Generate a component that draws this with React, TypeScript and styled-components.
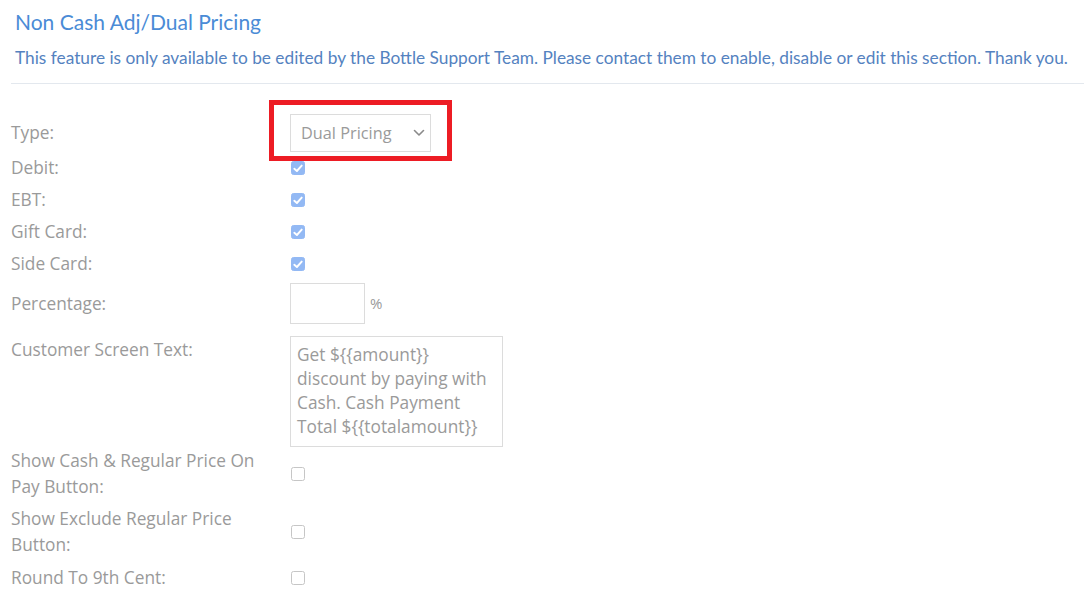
import React from "react";
import styled, { createGlobalStyle } from "styled-components";

const GlobalStyle = createGlobalStyle`
  html, body { margin: 0; padding: 0; background: #ffffff; }
  body { font-family: "Open Sans", "Liberation Sans", sans-serif; }
  * { box-sizing: border-box; }
`;

const Page = styled.div`
  width: 1084px;
  padding-left: 11px;
`;

const Header = styled.div`
  padding: 10px 0 0 4px;
`;

const Title = styled.h2`
  margin: 0;
  font-family: "Lato", "Liberation Sans", sans-serif;
  font-weight: 400;
  font-size: 21px;
  line-height: 24px;
  color: #4a8bd6;
`;

const Notice = styled.p`
  margin: 12px 0 0;
  font-family: "Lato", "Liberation Sans", sans-serif;
  font-size: 17.3px;
  line-height: 24px;
  color: #5482c0;
  white-space: nowrap;
`;

const Divider = styled.hr`
  margin: 13px 0 0;
  border: 0;
  border-top: 1px solid #e3e8ee;
`;

const Form = styled.div`
  padding-top: 30px;
  display: flex;
  flex-direction: column;
`;

const Row = styled.div<{ $h?: number; $mt?: number; $top?: boolean }>`
  display: grid;
  grid-template-columns: 279px 1fr;
  align-items: ${(p) => (p.$top ? "start" : "center")};
  min-height: ${(p) => p.$h ?? 32}px;
  margin-top: ${(p) => p.$mt ?? 0}px;
`;

const Label = styled.div<{ $pt?: number }>`
  padding-right: 15px;
  padding-top: ${(p) => p.$pt ?? 0}px;
  font-size: 17.3px;
  line-height: 25.5px;
  color: #9a9a9a;
`;

const Control = styled.div`
  display: flex;
  align-items: center;
  gap: 5px;
`;

const SelectWrap = styled.div`
  position: relative;
`;

const SelectBox = styled.div`
  width: 141px;
  height: 38px;
  border: 1px solid #dcdcdc;
  background: #fff;
  display: flex;
  align-items: center;
  justify-content: space-between;
  padding: 0 5px 0 10px;
  font-size: 16.3px;
  color: #9a9a9a;
`;

const Highlight = styled.div`
  position: absolute;
  left: -21px;
  top: -14px;
  width: 183px;
  height: 61px;
  border: 5px solid #ed1c24;
  pointer-events: none;
`;

const Check = styled.span<{ $on?: boolean }>`
  width: 14px;
  height: 14px;
  margin-left: 0.5px;
  border-radius: 2.5px;
  display: inline-flex;
  align-items: center;
  justify-content: center;
  background: ${(p) => (p.$on ? "#93b9f4" : "#ffffff")};
  border: 1px solid ${(p) => (p.$on ? "#93b9f4" : "#c6c6c6")};
`;

const TextInput = styled.div`
  width: 75px;
  height: 41px;
  border: 1px solid #dcdcdc;
  background: #fff;
`;

const Unit = styled.span`
  font-size: 15px;
  line-height: 20px;
  color: #9a9a9a;
  margin-top: -2px;
`;

const TextArea = styled.textarea`
  width: 213px;
  height: 111px;
  border: 1px solid #dcdcdc;
  padding: 6px 6px;
  margin: 0;
  font-family: "Open Sans", "Liberation Sans", sans-serif;
  font-size: 17.3px;
  line-height: 24px;
  color: #9a9a9a;
  resize: none;
  overflow: hidden;
  outline: none;
  display: block;
`;

const Chevron = () => (
  <svg width="12" height="8" viewBox="0 0 12 8" fill="none">
    <path d="M1.5 1.5 L6 6 L10.5 1.5" stroke="#8a8a8a" strokeWidth="1.6" strokeLinecap="round" strokeLinejoin="round" />
  </svg>
);

const Tick = () => (
  <svg width="10" height="9" viewBox="0 0 10 9" fill="none">
    <path d="M1.3 4.8 L3.9 7 L8.7 1.6" stroke="#ffffff" strokeWidth="1.9" strokeLinecap="round" strokeLinejoin="round" />
  </svg>
);

const CheckBox = ({ on }: { on?: boolean }) => <Check $on={on}>{on && <Tick />}</Check>;

export default function App() {
  return (
    <>
      <GlobalStyle />
      <Page>
        <Header>
          <Title>Non Cash Adj/Dual Pricing</Title>
          <Notice>
            This feature is only available to be edited by the Bottle Support Team. Please contact them to enable, disable or edit this section. Thank you.
          </Notice>
        </Header>
        <Divider />
        <Form>
          <Row $h={38}>
            <Label>Type:</Label>
            <Control>
              <SelectWrap>
                <SelectBox>
                  <span>Dual Pricing</span>
                  <Chevron />
                </SelectBox>
                <Highlight />
              </SelectWrap>
            </Control>
          </Row>
          <Row>
            <Label>Debit:</Label>
            <Control>
              <CheckBox on />
            </Control>
          </Row>
          <Row>
            <Label>EBT:</Label>
            <Control>
              <CheckBox on />
            </Control>
          </Row>
          <Row>
            <Label>Gift Card:</Label>
            <Control>
              <CheckBox on />
            </Control>
          </Row>
          <Row>
            <Label>Side Card:</Label>
            <Control>
              <CheckBox on />
            </Control>
          </Row>
          <Row $h={41} $mt={3}>
            <Label>Percentage:</Label>
            <Control>
              <TextInput />
              <Unit>%</Unit>
            </Control>
          </Row>
          <Row $h={111} $mt={12} $top>
            <Label $pt={1}>Customer Screen Text:</Label>
            <Control>
              <TextArea readOnly defaultValue="Get ${{amount}} discount by paying with Cash. Cash Payment Total ${{totalamount}}" />
            </Control>
          </Row>
          <Row $h={51} $mt={1}>
            <Label>Show Cash &amp; Regular Price On Pay Button:</Label>
            <Control>
              <CheckBox />
            </Control>
          </Row>
          <Row $h={51} $mt={7}>
            <Label>Show Exclude Regular Price Button:</Label>
            <Control>
              <CheckBox />
            </Control>
          </Row>
          <Row $h={25} $mt={8}>
            <Label>Round To 9th Cent:</Label>
            <Control>
              <CheckBox />
            </Control>
          </Row>
        </Form>
      </Page>
    </>
  );
}
